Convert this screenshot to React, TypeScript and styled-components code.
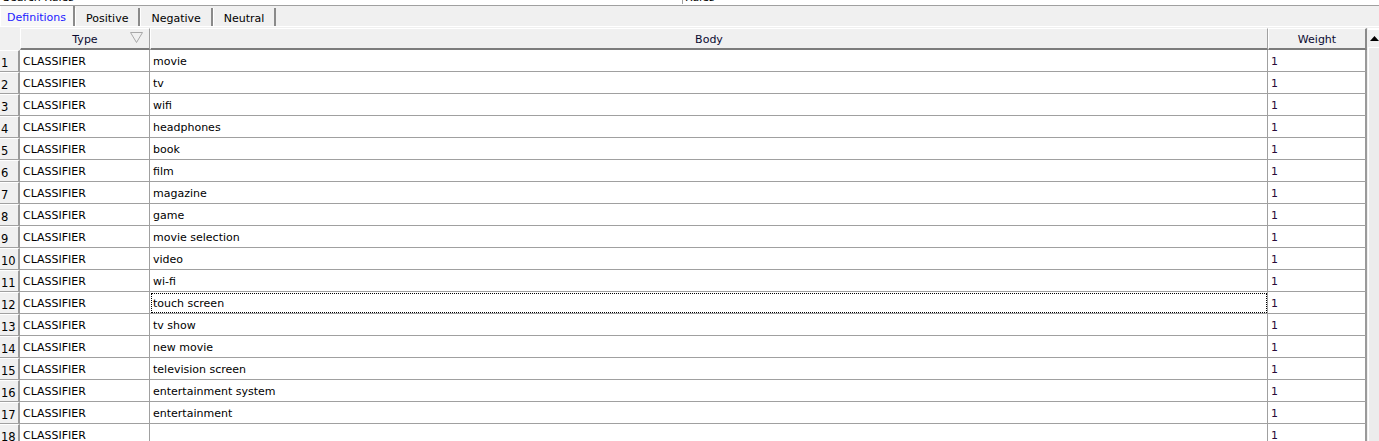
import React from "react";
import styled, { createGlobalStyle, css } from "styled-components";

const Global = createGlobalStyle`
  html, body { margin: 0; padding: 0; background: #f0f0f0; overflow: hidden; }
  body { font-family: "DejaVu Sans", Verdana, sans-serif; font-size: 11px; color: #000; }
`;

const Page = styled.div`
  width: 1379px;
  height: 441px;
  display: flex;
  flex-direction: column;
  overflow: hidden;
`;

const TopStrip = styled.div`
  height: 5px;
  background: #fff;
  border-bottom: 1px solid #a0a0a0;
  overflow: hidden;
  display: flex;
`;

const CutText = styled.span<{ $width?: number }>`
  display: block;
  flex: none;
  line-height: 13px;
  margin-top: -9px;
  white-space: nowrap;
  padding-left: 3px;
  box-sizing: border-box;
  ${(p) => p.$width && css`width: ${p.$width}px;`}
`;

const CenterCut = styled(CutText)`
  border-left: 1px solid #a0a0a0;
  padding-left: 2px;
  height: 13px;
`;

const TabStrip = styled.div`
  height: 20px;
  display: flex;
  align-items: flex-end;
`;

const Tab = styled.div<{ $active?: boolean }>`
  box-sizing: border-box;
  height: ${(p) => (p.$active ? 20 : 18)}px;
  padding: ${(p) => (p.$active ? "2px 7px 0 6px" : "3px 10px 0 10px")};
  display: flex;
  align-items: center;
  color: ${(p) => (p.$active ? "#1a1aff" : "#000")};
  background: ${(p) => (p.$active ? "#f7f7f7" : "#f0f0f0")};
  border-left: 1px solid #fff;
  border-right: 2px solid #8a8a8a;
  line-height: 13px;
`;

const Panel = styled.div`
  flex: 1;
  border-top: 1px solid #fff;
  display: flex;
  min-height: 0;
  padding-top: 1px;
`;

const Grid = styled.div`
  display: grid;
  grid-template-columns: 20px 130px 1118px 99px;
  grid-auto-rows: 22px;
  align-content: start;
`;

const Corner = styled.div`
  height: 21px;
`;

const HeadCell = styled.div<{ $last?: boolean }>`
  position: relative;
  box-sizing: border-box;
  height: 22px;
  display: flex;
  align-items: center;
  justify-content: center;
  background: #f0f0f0;
  border-top: 1px solid #fff;
  border-left: 1px solid #fff;
  border-right: ${(p) => (p.$last ? "2px solid #8a8a8a" : "1px solid #a0a0a0")};
  border-bottom: 2px solid #7c7c7c;
  padding-top: 1px;
  color: #0a0a30;
`;

const SortIcon = styled.svg`
  position: absolute;
  right: 6px;
  top: 3px;
`;

const RowHead = styled.div`
  box-sizing: border-box;
  background: #f0f0f0;
  border-top: 1px solid #fff;
  border-right: 2px solid #9a9a9a;
  border-bottom: 1px solid #a0a0a0;
  display: flex;
  align-items: center;
  padding-left: 1px;
  padding-top: 3px;
  font-size: 11.5px;
`;

const Cell = styled.div<{ $focus?: boolean; $weight?: boolean }>`
  box-sizing: border-box;
  background: #fff;
  border-right: 1px solid #a0a0a0;
  border-bottom: 1px solid #a0a0a0;
  display: flex;
  align-items: center;
  padding: 2px 0 0 3px;
  white-space: nowrap;
  overflow: hidden;
  color: ${(p) => (p.$weight ? "#2a0a3a" : "#000")};
  ${(p) => p.$weight && css`border-right: 2px solid #9a9a9a;`}
  ${(p) =>
    p.$focus &&
    css`
      outline: 1px dotted #000;
      outline-offset: -2px;
    `}
`;

const Scrollbar = styled.div`
  margin-left: 1px;
  width: 11px;
  display: flex;
  flex-direction: column;
  background: #fff;
`;

const ScrollUp = styled.div`
  height: 17px;
  margin-top: 2px;
  background: #f0f0f0;
  display: flex;
  align-items: center;
  padding-left: 2px;
  border-bottom: 1px solid #fff;
`;

const ScrollTrack = styled.div`
  flex: 1;
  margin-left: 1px;
  background: #ececec;
`;

const bodies = [
  "movie",
  "tv",
  "wifi",
  "headphones",
  "book",
  "film",
  "magazine",
  "game",
  "movie selection",
  "video",
  "wi-fi",
  "touch screen",
  "tv show",
  "new movie",
  "television screen",
  "entertainment system",
  "entertainment",
  "",
];

export default function App() {
  return (
    <Page>
      <Global />
      <TopStrip>
        <CutText $width={682}>Search Rules</CutText>
        <CenterCut>Rules</CenterCut>
      </TopStrip>
      <TabStrip>
        <Tab $active>Definitions</Tab>
        <Tab>Positive</Tab>
        <Tab>Negative</Tab>
        <Tab>Neutral</Tab>
      </TabStrip>
      <Panel>
        <Grid>
          <Corner />
          <HeadCell>
            Type
            <SortIcon width="13" height="11" viewBox="0 0 13 11">
              <path d="M0.5 0.5 H12.5 L6.5 10.5 Z" fill="none" stroke="#a8a8a8" strokeWidth="1" />
            </SortIcon>
          </HeadCell>
          <HeadCell>Body</HeadCell>
          <HeadCell $last>Weight</HeadCell>
          {bodies.map((b, i) => (
            <React.Fragment key={i}>
              <RowHead>{i + 1}</RowHead>
              <Cell>CLASSIFIER</Cell>
              <Cell $focus={i === 11}>{b}</Cell>
              <Cell $weight>1</Cell>
            </React.Fragment>
          ))}
        </Grid>
        <Scrollbar>
          <ScrollUp>
            <svg width="9" height="5" viewBox="0 0 9 5">
              <path d="M0 5 L4.5 0 L9 5 Z" fill="#000" />
            </svg>
          </ScrollUp>
          <ScrollTrack />
        </Scrollbar>
      </Panel>
    </Page>
  );
}
